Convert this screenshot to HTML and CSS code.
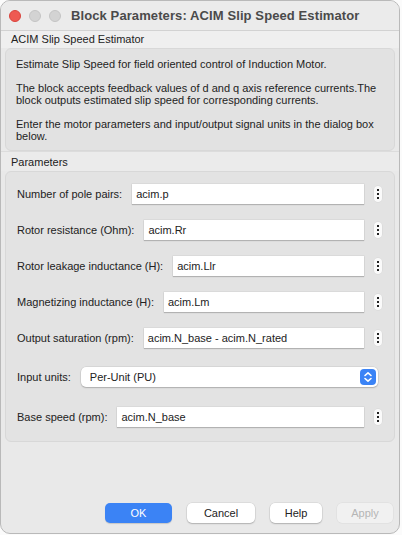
FILE: index.html
```html
<!DOCTYPE html>
<html>
<head>
<meta charset="utf-8">
<link rel="stylesheet" href="styles.css">
</head>
<body>
<div class="window">
  <div class="titlebar">
    <div class="lights">
      <span class="light red"></span>
      <span class="light gray"></span>
      <span class="light gray"></span>
    </div>
    <div class="title">Block Parameters: ACIM Slip Speed Estimator</div>
  </div>
  <div class="section-head">ACIM Slip Speed Estimator</div>
  <div class="desc">
    <p>Estimate Slip Speed for field oriented control of Induction Motor.</p>
    <p>The block accepts feedback values of d and q axis reference currents.The block outputs estimated slip speed for corresponding currents.</p>
    <p>Enter the motor parameters and input/output signal units in the dialog box below.</p>
  </div>
  <div class="section-head params-head">Parameters</div>
  <div class="params">
    <div class="row">
      <span class="label">Number of pole pairs:</span>
      <span class="input">acim.p</span>
      <span class="dots"><i></i><i></i><i></i></span>
    </div>
    <div class="row">
      <span class="label">Rotor resistance (Ohm):</span>
      <span class="input">acim.Rr</span>
      <span class="dots"><i></i><i></i><i></i></span>
    </div>
    <div class="row">
      <span class="label">Rotor leakage inductance (H):</span>
      <span class="input">acim.Llr</span>
      <span class="dots"><i></i><i></i><i></i></span>
    </div>
    <div class="row">
      <span class="label">Magnetizing inductance (H):</span>
      <span class="input">acim.Lm</span>
      <span class="dots"><i></i><i></i><i></i></span>
    </div>
    <div class="row">
      <span class="label">Output saturation (rpm):</span>
      <span class="input">acim.N_base - acim.N_rated</span>
      <span class="dots"><i></i><i></i><i></i></span>
    </div>
    <div class="row row-select">
      <span class="label">Input units:</span>
      <span class="select">
        <span class="select-text">Per-Unit (PU)</span>
        <span class="stepper">
          <svg width="16" height="16" viewBox="0 0 16 16"><path d="M5 6.5 L8 3.8 L11 6.5 M5 9.5 L8 12.2 L11 9.5" fill="none" stroke="#fff" stroke-width="1.6" stroke-linecap="round" stroke-linejoin="round"/></svg>
        </span>
      </span>
    </div>
    <div class="row row-base">
      <span class="label">Base speed (rpm):</span>
      <span class="input">acim.N_base</span>
      <span class="dots"><i></i><i></i><i></i></span>
    </div>
  </div>
  <div class="spacer"></div>
  <div class="buttons">
    <span class="btn primary">OK</span>
    <span class="btn">Cancel</span>
    <span class="btn help">Help</span>
    <span class="btn disabled">Apply</span>
  </div>
</div>
</body>
</html>
```
FILE: styles.css
```css
html, body {
  margin: 0;
  padding: 0;
  background: #fbfbfb;
  font-family: "Liberation Sans", Arial, sans-serif;
  color: #222;
}
.window {
  width: 398px;
  height: 532px;
  border: 1px solid #b9b9b9;
  border-radius: 10px;
  background: #e9e9e9;
  display: flex;
  flex-direction: column;
  overflow: hidden;
}
.titlebar {
  height: 29px;
  display: flex;
  align-items: center;
  background: #ebebeb;
  border-bottom: 1px solid #d2d2d2;
  flex-shrink: 0;
}
.lights {
  display: flex;
  gap: 8px;
  margin-left: 8px;
  width: 62px;
}
.light {
  width: 12px;
  height: 12px;
  border-radius: 50%;
  display: block;
}
.light.red { background: #ee5a52; border: 0.5px solid #d9443d; box-sizing: border-box; }
.light.gray { background: #d3d3d3; border: 0.5px solid #c4c4c4; box-sizing: border-box; }
.title {
  font-weight: bold;
  font-size: 13px;
  color: #4a4a4a;
  letter-spacing: 0.1px;
}
.section-head {
  height: 17px;
  line-height: 17px;
  font-size: 11px;
  padding-left: 10px;
  color: #222;
  background: #efefef;
  flex-shrink: 0;
}
.params-head {
  height: 19px;
  line-height: 21px;
  background: #ebebeb;
  border-top: 1px solid #dcdcdc;
}
.desc {
  margin: 0 4px;
  background: #e2e2e2;
  border: 1px solid #d8d8d8;
  border-radius: 6px;
  padding: 9px 10px 8px 10px;
  font-size: 11px;
  line-height: 12px;
  color: #222;
  flex-shrink: 0;
}
.desc p { margin: 0 0 12px 0; }
.desc p:last-child { margin-bottom: 0; }
.params {
  margin: 0 4px;
  background: #e3e3e3;
  border: 1px solid #d8d8d8;
  border-radius: 6px;
  padding: 12px 0 14px 11px;
  display: flex;
  flex-direction: column;
  gap: 16px;
  flex-shrink: 0;
}
.row {
  display: flex;
  align-items: center;
  height: 20px;
  font-size: 11px;
}
.row-select { margin-top: 3px; }
.row-base { margin-top: 4px; }
.label {
  white-space: nowrap;
  margin-right: 10px;
  color: #222;
}
.input {
  flex: 1;
  height: 20px;
  line-height: 20px;
  background: #fff;
  padding-left: 4px;
  box-shadow: 0 1px 1px rgba(0,0,0,0.18), 0 0 0 0.5px rgba(0,0,0,0.08);
  font-size: 11px;
  color: #222;
}
.dots {
  width: 8px;
  height: 16px;
  margin: 0 12px 0 10px;
  background: #fafafa;
  border-radius: 4px;
  display: flex;
  flex-direction: column;
  align-items: center;
  justify-content: center;
  gap: 2px;
  box-shadow: 0 0 0 0.5px rgba(0,0,0,0.06);
}
.dots i {
  width: 2px;
  height: 2px;
  background: #222;
  display: block;
}
.select {
  flex: 1;
  margin-right: 16px;
  height: 20px;
  background: #fff;
  border-radius: 5px;
  box-shadow: 0 1px 1.5px rgba(0,0,0,0.2), 0 0 0 0.5px rgba(0,0,0,0.1);
  display: flex;
  align-items: center;
  justify-content: space-between;
}
.select-text {
  padding-left: 9px;
  font-size: 11px;
  color: #222;
}
.stepper {
  width: 16px;
  height: 16px;
  margin-right: 2px;
  background: #3a83f6;
  border-radius: 4px;
  display: flex;
}
.spacer { flex: 1; }
.buttons {
  display: flex;
  justify-content: flex-end;
  align-items: center;
  gap: 15px;
  padding: 0 6px 10px 0;
  flex-shrink: 0;
}
.btn {
  height: 20px;
  line-height: 20px;
  border-radius: 5px;
  background: #fff;
  font-size: 11px;
  text-align: center;
  width: 68px;
  color: #222;
  box-shadow: 0 1px 1.5px rgba(0,0,0,0.2), 0 0 0 0.5px rgba(0,0,0,0.1);
}
.btn.primary {
  width: 67px;
  background: #3b83f5;
  color: #fff;
  box-shadow: 0 1px 1px rgba(0,0,0,0.15);
}
.btn.help { width: 52px; }
.btn.disabled {
  width: 56px;
  background: #f1f1f1;
  color: #b5b5b5;
  box-shadow: 0 0 0 0.5px rgba(0,0,0,0.06);
}
```
